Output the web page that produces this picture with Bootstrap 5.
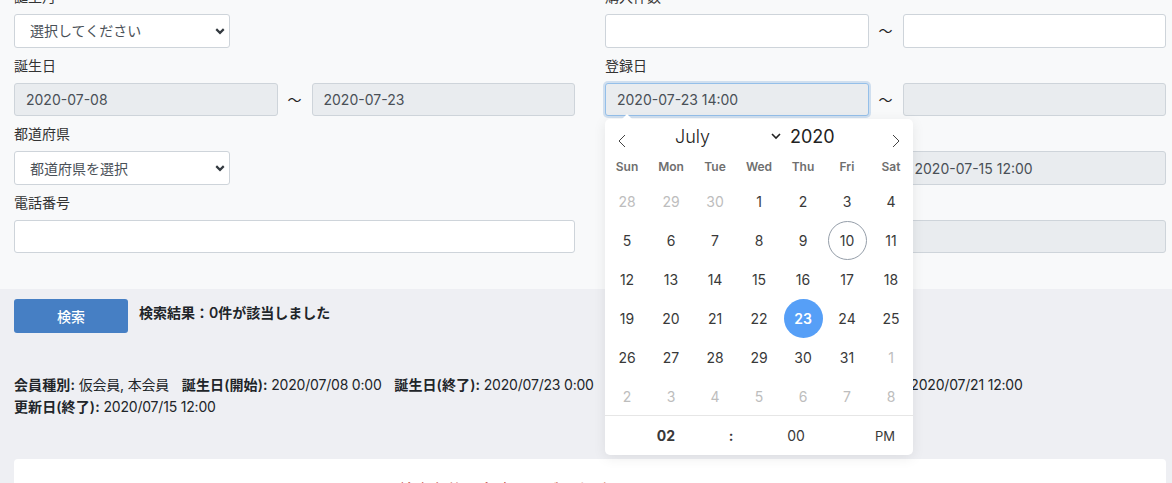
<!DOCTYPE html>
<html lang="ja">
<head>
    <meta charset="UTF-8">
    <title>会員検索</title>
    <link href="https://cdn.jsdelivr.net/npm/bootstrap@5.3.0/dist/css/bootstrap.min.css" rel="stylesheet">
    <style>
        html, body { height: 483px; overflow: hidden; }
        body {
            background: #eeeff3;
            color: #212529;
            font-family: Inter, "Noto Sans CJK JP", sans-serif;
            font-size: 14px;
        }
        .search-panel {
            background: #f8f9fa;
            margin-top: -29px;
            height: 318px;
            padding: 0 6px 0 14px;
        }
        .search-cols { display: grid; grid-template-columns: 561px 561px; column-gap: 30px; }
        .field-box { height: 68.67px; padding-top: 17px; }
        .field-box label { display: block; font-size: 14px; line-height: 17px; margin-bottom: 9px; color: #333; }
        .field-box .form-control, .field-box .form-select {
            height: 33.5px;
            min-height: 0;
            font-size: 14px;
            padding: 0 11px;
            border-color: #ced4da;
            color: #495057;
            border-radius: 3px;
        }
        .field-box .form-select {
            width: 216px;
            padding-left: 15px;
            background-image: url("data:image/svg+xml,%3csvg xmlns='http://www.w3.org/2000/svg' viewBox='0 0 16 16'%3e%3cpath fill='none' stroke='%23343a40' stroke-width='3.4' d='M2 5l6 6 6-6'/%3e%3c/svg%3e");
            background-position: right 4px center;
            background-size: 10px 10px;
        }
        .field-box .form-control:disabled, .field-box .form-control[readonly] { background: #e9ecef; }
        .field-box .form-control.is-open { border-color: #94bfe9; box-shadow: 0 0 0 2px rgba(70, 130, 200, .22); }
        .range-sep { width: 34px; flex: none; text-align: center; font-size: 14px; color: #222; }
        .search-bar { padding: 10px 14px 0; display: flex; gap: 11px; align-items: flex-start; }
        .search-btn {
            width: 114px; height: 34px; padding: 0;
            background: #467fc4; border: 0; border-radius: 3px;
            color: #fff; font-size: 14px; font-weight: 500;
        }
        .result-count { font-weight: 600; font-size: 14px; line-height: 18px; margin-top: 5px; }
        .cond-list { padding: 0 14px; margin-top: 41px; line-height: 22px; font-size: 14px; letter-spacing: -.2px; width: 1172px; }
        .cond-list span { margin-right: 9px; }
        .cond-list b { font-weight: 600; letter-spacing: .1px; }
        .empty-card {
            background: #fff; border-radius: 4px;
            margin: 41px 6px 0 14px; height: 120px;
            padding-top: 19px; text-align: center; color: #c0392b; font-size: 16px; line-height: 24px;
        }

        /* date picker */
        .cal-pop {
            position: absolute; left: 605px; top: 119px;
            width: 308px; height: 336px;
            background: #fff; border-radius: 5px;
            box-shadow: 0 3px 13px rgba(0, 0, 0, .08);
            font-size: 14px; color: #393939;
        }
        .cal-pop::before {
            content: ""; position: absolute; left: 17px; top: -5px;
            border: solid transparent; border-width: 0 5px 5px; border-bottom-color: #fff;
        }
        .cal-head { position: relative; height: 38px; }
        .cal-head svg { position: absolute; }
        .cal-month { position: absolute; left: 70px; top: 5px; font-size: 18px; font-weight: 300; line-height: 26px; color: #222; }
        .cal-year { position: absolute; left: 185px; top: 5px; font-size: 18px; font-weight: 400; line-height: 26px; color: #222; }
        .cal-grid { display: grid; grid-template-columns: repeat(7, 44px); grid-auto-rows: auto; }
        .cal-wd { height: 20px; line-height: 20px; text-align: center; font-size: 12px; font-weight: 600; color: #6f6f6f; margin-bottom: 5px; }
        .cal-day { height: 39px; width: 39px; margin: 0 auto; text-align: center; border-radius: 50%; border: 1px solid transparent; line-height: 37px; }
        .cal-day.dim { color: #bdbdbd; }
        .cal-day.now { border-color: #959ea9; }
        .cal-day.sel { background: #569ff7; color: #fff; font-weight: 600; }
        .cal-time {
            position: absolute; left: 0; right: 0; top: 296px; height: 40px;
            border-top: 1px solid #e6e6e6;
            display: grid; grid-template-columns: 122px 8px 122px 56px; align-items: center;
        }
        .cal-time div { text-align: center; line-height: 38px; }
        .cal-ampm { font-size: 13px; }
    </style>
</head>
<body>
    <form class="search-panel">
        <div class="search-cols">
            <div>
                <div class="field-box">
                    <label>誕生月</label>
                    <select class="form-select"><option>選択してください</option></select>
                </div>
                <div class="field-box">
                    <label>誕生日</label>
                    <div class="d-flex align-items-center">
                        <input class="form-control" readonly value="2020-07-08">
                        <div class="range-sep">〜</div>
                        <input class="form-control" readonly value="2020-07-23">
                    </div>
                </div>
                <div class="field-box">
                    <label>都道府県</label>
                    <select class="form-select"><option>都道府県を選択</option></select>
                </div>
                <div class="field-box">
                    <label>電話番号</label>
                    <input class="form-control">
                </div>
            </div>
            <div>
                <div class="field-box">
                    <label>購入件数</label>
                    <div class="d-flex align-items-center">
                        <input class="form-control">
                        <div class="range-sep">〜</div>
                        <input class="form-control">
                    </div>
                </div>
                <div class="field-box">
                    <label>登録日</label>
                    <div class="d-flex align-items-center">
                        <input class="form-control is-open" readonly value="2020-07-23 14:00">
                        <div class="range-sep">〜</div>
                        <input class="form-control" readonly>
                    </div>
                </div>
                <div class="field-box">
                    <label>更新日</label>
                    <div class="d-flex align-items-center">
                        <input class="form-control" readonly value="2020-07-21 12:00">
                        <div class="range-sep">〜</div>
                        <input class="form-control" readonly value="2020-07-15 12:00">
                    </div>
                </div>
                <div class="field-box">
                    <label>最終購入日</label>
                    <div class="d-flex align-items-center">
                        <input class="form-control" readonly>
                        <div class="range-sep">〜</div>
                        <input class="form-control" readonly>
                    </div>
                </div>
            </div>
        </div>
    </form>

    <div class="search-bar">
        <button type="button" class="search-btn">検索</button>
        <div class="result-count">検索結果：0件が該当しました</div>
    </div>

    <div class="cond-list">
        <span><b>会員種別:</b> 仮会員, 本会員</span>
        <span><b>誕生日(開始):</b> 2020/07/08 0:00</span>
        <span><b>誕生日(終了):</b> 2020/07/23 0:00</span>
        <span><b>登録日(開始):</b> 2020/07/21 12:00</span>
        <span><b>更新日(開始):</b> 2020/07/21 12:00</span>
        <br>
        <span><b>更新日(終了):</b> 2020/07/15 12:00</span>
    </div>

    <div class="empty-card">検索条件に合致するデータが見つかりませんでした。</div>

    <div class="cal-pop">
        <div class="cal-head">
            <svg style="left:12px;top:15px" width="10" height="14" viewBox="0 0 10 14" fill="none" stroke="#444" stroke-width="1"><path d="M8 1 2 7l6 6"/></svg>
            <span class="cal-month">July</span>
            <svg style="left:166px;top:14px" width="10" height="7" viewBox="0 0 10 7" fill="none" stroke="#222" stroke-width="1.6"><path d="M1 1l4 4 4-4"/></svg>
            <span class="cal-year">2020</span>
            <svg style="left:286px;top:15px" width="10" height="14" viewBox="0 0 10 14" fill="none" stroke="#444" stroke-width="1"><path d="M2 1l6 6-6 6"/></svg>
        </div>
        <div class="cal-grid" id="calGrid"></div>
        <div class="cal-time">
            <div class="fw-bold">02</div>
            <div class="fw-bold">:</div>
            <div>00</div>
            <div class="cal-ampm">PM</div>
        </div>
    </div>

    <script>
        // build the month grid
        const grid = document.getElementById('calGrid');
        let html = ['Sun', 'Mon', 'Tue', 'Wed', 'Thu', 'Fri', 'Sat'].map(d => `<div class="cal-wd">${d}</div>`).join('');
        const days = [28, 29, 30].map(d => [d, 'dim']);
        for (let d = 1; d <= 31; d++) days.push([d, d === 10 ? 'now' : d === 23 ? 'sel' : '']);
        for (let d = 1; d <= 8; d++) days.push([d, 'dim']);
        html += days.map(([d, c]) => `<div class="cal-day ${c}">${d}</div>`).join('');
        grid.innerHTML = html;
    </script>
    <script src="https://cdn.jsdelivr.net/npm/bootstrap@5.3.0/dist/js/bootstrap.bundle.min.js"></script>
</body>
</html>
